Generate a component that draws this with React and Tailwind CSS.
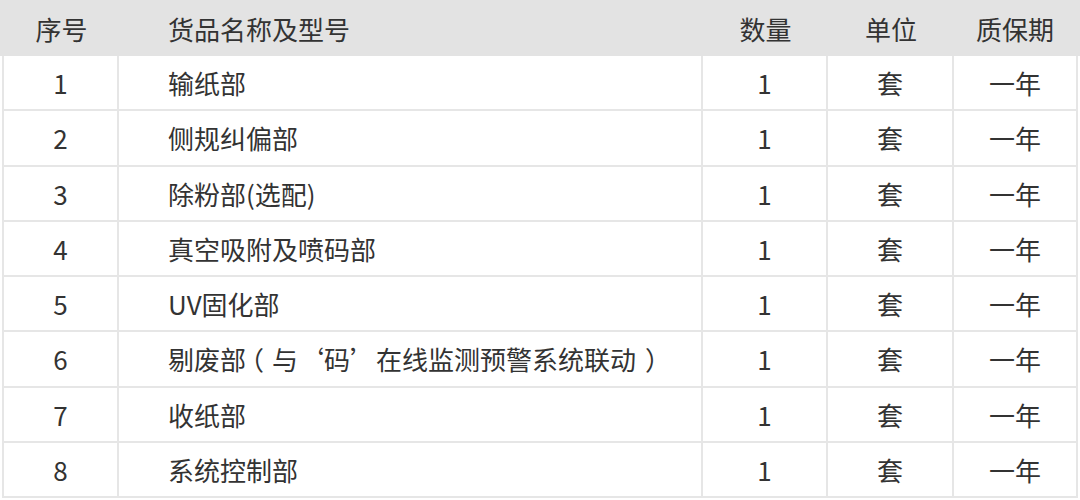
import React from 'react';

const ROWS = [
  { no: 1, name: '输纸部' },
  { no: 2, name: '侧规纠偏部' },
  { no: 3, name: '除粉部(选配)' },
  { no: 4, name: '真空吸附及喷码部' },
  { no: 5, name: 'UV固化部' },
  {
    no: 6,
    name: (
      <>
        剔废部<span className="relative -left-[8px]">（</span>与‘码’在线监测预警系统联动
        <span className="ml-[9px]">）</span>
      </>
    ),
  },
  { no: 7, name: '收纸部' },
  { no: 8, name: '系统控制部' },
];

const cols = 'grid grid-cols-[115px_584px_125px_126px_1fr]';

const App = () => {
  return (
    <div
      className="w-[1080px] h-[500px] bg-white text-[26px] text-[#333333] overflow-hidden"
      style={{ fontFamily: '"Noto Sans CJK SC", "Noto Sans", sans-serif' }}
    >
      {/* header */}
      <div className="h-[56px] bg-[#e3e3e3] px-[4px]">
        <div className={`${cols} h-full items-center`}>
          <div className="text-center">序号</div>
          <div className="pl-[49px]">货品名称及型号</div>
          <div className="text-center">数量</div>
          <div className="text-center">单位</div>
          <div className="text-center">质保期</div>
        </div>
      </div>

      {/* body */}
      <div className="mx-[2px] border-x-2 border-[#e6e6e6]">
        {ROWS.map((row) => (
          <div key={row.no} className={`${cols} h-[55.25px] border-b-2 border-[#e6e6e6]`}>
            <div className="flex items-center justify-center border-r-2 border-[#e6e6e6]">{row.no}</div>
            <div className="flex items-center pl-[49px] border-r-2 border-[#e6e6e6] whitespace-nowrap">
              <span>{row.name}</span>
            </div>
            <div className="flex items-center justify-center border-r-2 border-[#e6e6e6]">1</div>
            <div className="flex items-center justify-center border-r-2 border-[#e6e6e6]">套</div>
            <div className="flex items-center justify-center">一年</div>
          </div>
        ))}
      </div>
    </div>
  );
};

export default App;
